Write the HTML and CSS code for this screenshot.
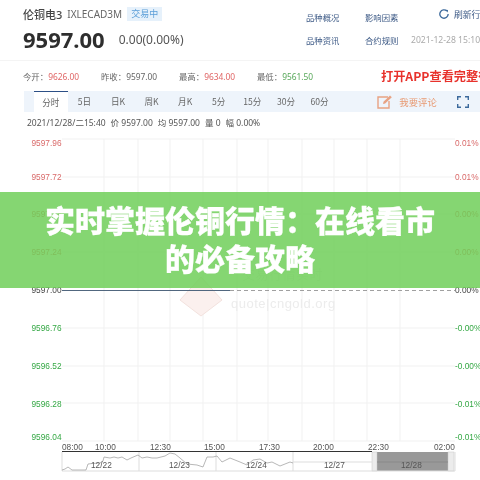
FILE: index.html
```html
<!DOCTYPE html>
<html lang="zh-CN">
<head>
    <meta charset="UTF-8">
    <meta name="viewport" content="width=device-width, initial-scale=1.0">
    <title>实时掌握伦铜行情：在线看市的必备攻略</title>
    <link rel="stylesheet" href="styles.css">
</head>
<body>
    <div class="page">
        <div class="top">
            <div class="quote">
                <div class="name-row">
                    <span class="name">伦铜电3</span>
                    <span class="code">IXLECAD3M</span>
                    <span class="badge">交易中</span>
                </div>
                <div class="price-row">
                    <span class="price">9597.00</span>
                    <span class="change">0.00(0.00%)</span>
                </div>
            </div>
            <div class="links">
                <a>品种概况</a>
                <a>影响因素</a>
                <a class="refresh">
                    <svg class="refresh-icon" viewBox="0 0 12 12"><path d="M9.4 2.4A5 5 0 1 0 11 6" fill="none" stroke="#3d6a9c" stroke-width="1.6"/><path d="M7.8 1l3 0.2-0.4 3z" fill="#3d6a9c"/></svg>
                    刷新行情
                </a>
                <a>品种资讯</a>
                <a>合约规则</a>
                <span class="stamp">2021-12-28 15:10:00</span>
            </div>
        </div>

        <div class="stats">
            <div class="stat">今开：<span class="up">9626.00</span></div>
            <div class="stat">昨收：<span>9597.00</span></div>
            <div class="stat">最高：<span class="up">9634.00</span></div>
            <div class="stat">最低：<span class="down">9561.50</span></div>
            <div class="open-app">打开APP查看完整行情</div>
        </div>

        <div class="toolbar">
            <span class="tab active">分时</span>
            <span class="tab">5日</span>
            <span class="tab">日K</span>
            <span class="tab">周K</span>
            <span class="tab">月K</span>
            <span class="tab">5分</span>
            <span class="tab">15分</span>
            <span class="tab">30分</span>
            <span class="tab">60分</span>
            <span class="comment">
                <svg class="comment-icon" viewBox="0 0 16 14"><path d="M11 2H1v11h11V6" fill="none" stroke="#e8a283" stroke-width="1.4"/><path d="M6 9l0.5-2.2L13 0.6l1.8 1.7L8.2 8.6z" fill="#e8a283"/></svg>
                我要评论
            </span>
            <svg class="full-icon" viewBox="0 0 12 12"><path d="M0.7 4V0.7H4M8 0.7h3.3V4M11.3 8v3.3H8M4 11.3H0.7V8" fill="none" stroke="#3d6a9c" stroke-width="1.4"/></svg>
        </div>

        <div class="info">
            <span>2021/12/28/二15:40</span>
            <span>价 9597.00</span>
            <span>均 9597.00</span>
            <span>量 0</span>
            <span>幅 0.00%</span>
        </div>

        <svg class="chart" viewBox="0 132 480 348" width="480" height="348">
            <g class="grid">
                <path d="M62 139H455M62 177H455M62 214H455M62 252H455M62 328H455M62 366H455M62 403H455M62 441H455"/>
                <path d="M104 139V441M138 139V441M170 139V441M203 139V441M237 139V441M268 139V441M302 139V441M334 139V441M367 139V441M400 139V441"/>
            </g>

            <g class="mark">
                <path class="mark-shape" d="M201 277L222 300L201 316L180 300Z"/>
                <text class="mark-text" x="231" y="308">quote|cngold.org</text>
                <text class="mark-text" x="242" y="279">交易行情实时</text>
            </g>

            <path class="base-dash" d="M230 290.5H455"/>
            <path class="base-line" d="M62 290.5H230"/>

            <g class="axis up">
                <text x="61.5" y="146">9597.96</text>
                <text x="61.5" y="180">9597.72</text>
                <text x="61.5" y="217">9597.48</text>
                <text x="61.5" y="255">9597.24</text>
            </g>
            <text class="axis" x="61.5" y="293">9597.00</text>
            <g class="axis down">
                <text x="61.5" y="331">9596.76</text>
                <text x="61.5" y="369">9596.52</text>
                <text x="61.5" y="407">9596.28</text>
                <text x="61.5" y="440">9596.04</text>
            </g>

            <g class="axis-r up">
                <text x="455" y="146">0.01%</text>
                <text x="455" y="180">0.01%</text>
                <text x="455" y="217">0.00%</text>
                <text x="455" y="255">0.00%</text>
            </g>
            <text class="axis-r" x="455" y="293">0.00%</text>
            <g class="axis-r down">
                <text x="455" y="331">-0.00%</text>
                <text x="455" y="369">-0.00%</text>
                <text x="455" y="407">-0.01%</text>
                <text x="455" y="440">-0.01%</text>
            </g>

            <g class="times">
                <text x="62" y="450">08:00</text>
                <text x="95" y="450">10:00</text>
                <text x="150" y="450">12:30</text>
                <text x="204" y="450">15:00</text>
                <text x="259" y="450">17:30</text>
                <text x="313" y="450">20:00</text>
                <text x="368" y="450">22:30</text>
                <text x="434" y="450">02:00</text>
            </g>

            <rect class="nav-selected" x="377" y="452" width="71" height="19"/>
            <rect class="nav-handle" x="372" y="452" width="5" height="19"/>
            <rect class="nav-handle" x="448" y="452" width="6" height="19"/>
            <path class="nav-frame" d="M62 452V471H455V452M139 452V471M216 452V471M293 452V471"/>
            <path class="nav-axis" d="M62 451.5H372"/>
            <path class="nav-flat" d="M293 462H372"/>
            <path class="nav-flat-dark" d="M377 462H448"/>
            <polyline class="spark" points="62,470 65,469 68,467 72,470 86,470 88,464 92,463.5 100,463 103,461 104,457 110,458 114,457 118,458 122,457 127,460 131,458 138,455 142,458 147,457 152,458 157,458 165,456 170,453 175,454 180,458 187,464 197,465 203,467 207,457 213,457 217,456 222,462 230,458 240,462 247,465 253,460 260,459 267,463 272,462 280,466 290,462 293,463"/>

            <g class="nav-dates">
                <text x="91" y="468">12/22</text>
                <text x="169" y="468">12/23</text>
                <text x="246" y="468">12/24</text>
                <text x="324" y="468">12/27</text>
                <text x="401" y="468">12/28</text>
            </g>
        </svg>

        <div class="banner">实时掌握伦铜行情：在线看市<br>的必备攻略</div>
    </div>
</body>
</html>
```

FILE: styles.css
```css
* {
    box-sizing: border-box;
}
body {
    margin: 0;
    background: #fff;
}
.page {
    position: relative;
    width: 480px;
    height: 480px;
    overflow: hidden;
    background: #fff;
    color: #555;
    font-family: "Liberation Sans", "Noto Sans CJK SC", sans-serif;
    font-size: 9px;
    filter: blur(0.35px);
}
.top {
    display: flex;
    justify-content: space-between;
    height: 61px;
    padding: 7px 0 0 23px;
    border-bottom: 1px solid #f4f4f4;
}
.name-row {
    display: flex;
    align-items: center;
    height: 14px;
}
.name {
    font-family: "Noto Sans", "Noto Sans CJK SC", sans-serif;
    font-size: 11px;
    font-weight: 500;
    color: #444;
}
.code {
    margin-left: 5px;
    font-family: "Noto Sans", sans-serif;
    font-size: 10px;
    color: #666;
}
.badge {
    margin-left: 5px;
    padding: 0 4px;
    line-height: 14px;
    font-family: "Noto Sans CJK SC", sans-serif;
    font-size: 9px;
    color: #5c9fd8;
    background: #e6f1fb;
}
.price-row {
    display: flex;
    align-items: center;
    height: 28px;
    margin-top: 4px;
}
.price {
    font-family: "Noto Sans", sans-serif;
    font-size: 22px;
    font-weight: 700;
    color: #2e2e2e;
}
.change {
    margin-left: 14px;
    font-family: "Noto Sans", sans-serif;
    font-size: 12px;
    color: #555;
}
.links {
    display: grid;
    grid-template-columns: 59px 46px 69px;
    grid-auto-rows: 23px;
    align-items: center;
    width: 174px;
    margin-top: -2px;
    font-family: "Noto Sans CJK SC", sans-serif;
    font-size: 8.4px;
    color: #3d5a86;
    white-space: nowrap;
}
.refresh {
    display: flex;
    align-items: center;
    gap: 5px;
    margin-top: -5px;
    margin-left: 28px;
    font-size: 8.8px;
}
.refresh-icon {
    flex: none;
    width: 10px;
    height: 10px;
}
.stamp {
    color: #aaa;
    font-size: 8.6px;
    font-family: "Noto Sans", sans-serif;
}
.stats {
    display: flex;
    align-items: center;
    height: 30px;
    padding-left: 23px;
    font-family: "Noto Sans", "Noto Sans CJK SC", sans-serif;
    font-size: 8.4px;
    color: #666;
    white-space: nowrap;
}
.stat {
    flex: none;
    width: 78px;
}
.up {
    color: #e06666;
    fill: #d96a6a;
}
.down {
    color: #58a85a;
    fill: #35a845;
}
.open-app {
    flex: none;
    margin-left: 46px;
    font-family: "Noto Sans CJK SC", sans-serif;
    font-size: 12.2px;
    font-weight: 700;
    color: #e8322c;
}
.toolbar {
    display: flex;
    align-items: center;
    height: 21px;
    margin-left: 24px;
    padding-left: 10px;
    background: #eef4fb;
    font-family: "Noto Sans CJK SC", sans-serif;
    font-size: 8.6px;
    color: #666;
    white-space: nowrap;
}
.tab {
    flex: none;
    width: 33.6px;
    line-height: 21px;
    text-align: center;
}
.tab.active {
    height: 21px;
    background: #fff;
    border-top: 1px solid #2c4f86;
    line-height: 21px;
}
.comment {
    display: flex;
    flex: none;
    align-items: center;
    gap: 6px;
    margin-left: 41px;
    color: #e89a73;
    font-size: 9.4px;
}
.comment-icon {
    width: 16px;
    height: 14px;
}
.full-icon {
    flex: none;
    width: 12px;
    height: 12px;
    margin-left: 20px;
}
.info {
    display: flex;
    align-items: center;
    height: 20px;
    padding-left: 27px;
    font-family: "Noto Sans", "Noto Sans CJK SC", sans-serif;
    font-size: 8.5px;
    color: #555;
    white-space: nowrap;
    gap: 5px;
}
.chart {
    display: block;
}
.grid path {
    fill: none;
    stroke: #f1f1f1;
    stroke-width: 1;
}
.mark-shape {
    fill: #fbf0ee;
    stroke: #f3e2de;
}
.mark-text {
    font-size: 13px;
    letter-spacing: 0.5px;
    fill: #ececec;
}
.base-line {
    stroke: #51677f;
    stroke-width: 1.2;
}
.base-dash {
    stroke: #888;
    stroke-width: 0.8;
    stroke-dasharray: 4 3;
}
.axis {
    font-size: 8.3px;
    text-anchor: end;
    fill: #444;
}
.axis-r {
    font-size: 8.3px;
    fill: #444;
}
.axis.up,
.axis-r.up {
    fill: #d96a6a;
}
.axis.down,
.axis-r.down {
    fill: #35a845;
}
.times text,
.nav-dates text {
    font-size: 8.3px;
    fill: #555;
}
.nav-selected {
    fill: #999;
}
.nav-handle {
    fill: #ececec;
    stroke: #c8c8c8;
    stroke-width: 0.5;
}
.nav-frame {
    fill: none;
    stroke: #ddd;
}
.nav-axis {
    stroke: #333;
    stroke-width: 1.2;
}
.nav-flat {
    stroke: #ddd;
    stroke-width: 1.2;
}
.nav-flat-dark {
    stroke: #8a8a8a;
    stroke-width: 1.2;
}
.spark {
    fill: none;
    stroke: #999;
    stroke-width: 0.7;
}
.banner {
    position: absolute;
    left: 0;
    top: 192px;
    width: 480px;
    height: 96px;
    padding-top: 8px;
    background: rgba(110, 206, 87, 0.84);
    font-family: "Noto Sans CJK SC", sans-serif;
    font-size: 30px;
    font-weight: 900;
    line-height: 38px;
    text-align: center;
    color: #fff;
    -webkit-text-stroke: 0.3px #fff;
}
```
